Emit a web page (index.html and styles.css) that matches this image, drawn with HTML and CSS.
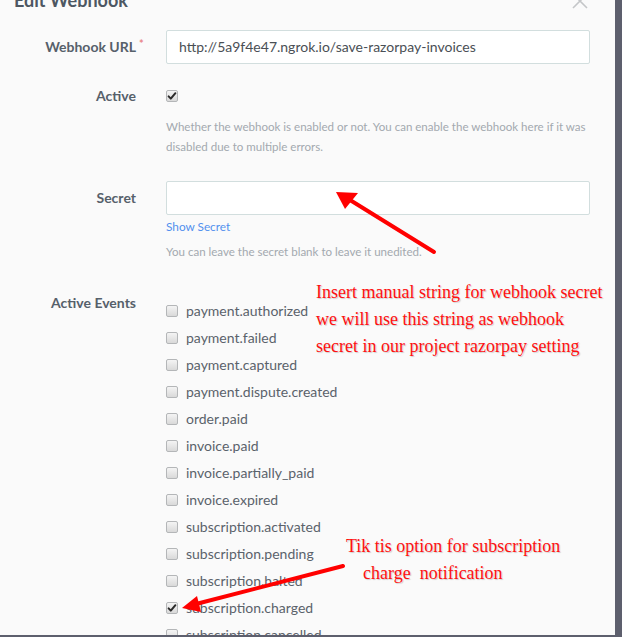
FILE: index.html
```html
<!DOCTYPE html>
<html>
<head>
<meta charset="utf-8">
<link rel="stylesheet" href="styles.css">
</head>
<body>
<div class="modal">
  <h2 class="title">Edit Webhook</h2>
  <svg class="close" width="16" height="16" viewBox="0 0 16 16"><path d="M1 14 L15 0 M1 0 L15 14" stroke="#c4c6c8" stroke-width="1.6" fill="none"/></svg>

  <div class="row row-url">
    <div class="label">Webhook URL<span class="req">*</span></div>
    <div class="field"><div class="input">http://5a9f4e47.ngrok.io/save-razorpay-invoices</div></div>
  </div>

  <div class="row row-active">
    <div class="label lbl16">Active</div>
    <div class="field">
      <div class="checkline"><span class="cb checked"><svg viewBox="0 0 12 12" width="12" height="12"><path d="M2.6 6.4 L4.8 8.6 L9.4 3.2" stroke="#2a2a2a" stroke-width="2" fill="none" stroke-linecap="round" stroke-linejoin="round"/></svg></span></div>
      <p class="help help-active">Whether the webhook is enabled or not. You can enable the webhook here if it was disabled due to multiple errors.</p>
    </div>
  </div>

  <div class="row row-secret">
    <div class="label lbl34">Secret</div>
    <div class="field">
      <div class="input"></div>
      <div class="show">Show Secret</div>
      <p class="help help-secret">You can leave the secret blank to leave it unedited.</p>
    </div>
  </div>

  <div class="row row-events">
    <div class="label lbl16">Active Events</div>
    <div class="field">
      <ul class="events">
        <li><span class="cb"></span>payment.authorized</li>
        <li><span class="cb"></span>payment.failed</li>
        <li><span class="cb"></span>payment.captured</li>
        <li><span class="cb"></span>payment.dispute.created</li>
        <li><span class="cb"></span>order.paid</li>
        <li><span class="cb"></span>invoice.paid</li>
        <li><span class="cb"></span>invoice.partially_paid</li>
        <li><span class="cb"></span>invoice.expired</li>
        <li><span class="cb"></span>subscription.activated</li>
        <li><span class="cb"></span>subscription.pending</li>
        <li><span class="cb"></span>subscription.halted</li>
        <li><span class="cb checked"><svg viewBox="0 0 12 12" width="12" height="12"><path d="M2.6 6.4 L4.8 8.6 L9.4 3.2" stroke="#2a2a2a" stroke-width="2" fill="none" stroke-linecap="round" stroke-linejoin="round"/></svg></span>subscription.charged</li>
        <li><span class="cb"></span>subscription.cancelled</li>
      </ul>
    </div>
  </div>

  <div class="note note1">Insert manual string for webhook secret<br>we will use this string as webhook<br>secret in our project razorpay setting</div>
  <div class="note note2">Tik tis option for subscription<br><span class="indent">charge&nbsp; notification</span></div>

  <svg class="arrows" width="622" height="637" viewBox="0 0 622 637">
    <line x1="434" y1="252" x2="350" y2="200" stroke="#ff0000" stroke-width="4" stroke-linecap="round"/>
    <polygon points="336,192 358,193 345,209" fill="#ff0000"/>
    <line x1="343" y1="566" x2="196" y2="604" stroke="#ff0000" stroke-width="4" stroke-linecap="round"/>
    <polygon points="182,608 197,596 201,612" fill="#ff0000"/>
  </svg>
</div>
<div class="backdrop"></div>
</body>
</html>
```

FILE: styles.css
```css
html, body {
  margin: 0;
  padding: 0;
}
body {
  width: 622px;
  height: 637px;
  background: #5d5f6d;
  display: flex;
  overflow: hidden;
  font-family: Lato, "Open Sans", sans-serif;
}
.modal {
  position: relative;
  width: 615px;
  height: 635px;
  flex: none;
  background: #fafafa;
  overflow: hidden;
}
.backdrop {
  flex: 1;
}
.title {
  margin: -10px 0 0 14px;
  font-size: 18px;
  line-height: 20px;
  font-weight: 700;
  color: #4d5762;
  height: 20px;
}
.close {
  position: absolute;
  left: 572px;
  top: -6px;
}
.row {
  display: grid;
  grid-template-columns: 136px 424px;
  column-gap: 30px;
}
.row-url { margin-top: 20px; }
.row-active { margin-top: 24px; }
.row-secret { margin-top: 24px; }
.row-events { margin-top: 35px; }
.label {
  text-align: right;
  font-size: 14px;
  font-weight: 700;
  color: #56606a;
  line-height: 34px;
  position: relative;
  white-space: nowrap;
}
.req {
  color: #e98686;
  font-size: 11px;
  position: absolute;
  left: 139px;
  top: -3px;
}
.lbl16 { line-height: 16px; }
.lbl34 { line-height: 34px; }
.input {
  height: 32px;
  border: 1px solid #d2dede;
  border-radius: 2px;
  background: #fff;
  padding: 0 12px;
  font-size: 14px;
  line-height: 32px;
  color: #4a4f55;
}
.checkline {
  height: 16px;
  display: flex;
  align-items: center;
}
.cb {
  display: inline-block;
  box-sizing: border-box;
  width: 12px;
  height: 12px;
  border: 1px solid #b4b6b8;
  border-radius: 2px;
  background: linear-gradient(#f4f4f4, #d9d9d9);
  flex: none;
  position: relative;
}
.cb svg {
  position: absolute;
  left: -1px;
  top: -1px;
}
.help {
  margin: 0;
  font-size: 11.55px;
  color: #a3a9af;
}
.help-active {
  margin-top: 13px;
  line-height: 20px;
}
.show {
  margin-top: 4px;
  font-size: 11.8px;
  line-height: 16px;
  color: #5290ee;
}
.help-secret {
  margin-top: 9px;
  line-height: 16px;
}
.events {
  list-style: none;
  margin: 2px 0 0;
  padding: 0;
}
.events li {
  height: 27px;
  display: flex;
  align-items: center;
  gap: 8px;
  font-size: 14px;
  color: #5a626b;
}
.note {
  position: absolute;
  font-family: "Liberation Serif", serif;
  font-size: 18px;
  line-height: 27px;
  color: #ff1010;
  text-shadow: 1px 1px 1px rgba(0, 0, 0, 0.18);
  white-space: nowrap;
}
.note1 { left: 316px; top: 279px; }
.note2 { left: 346px; top: 533px; }
.indent { padding-left: 17px; }
.arrows {
  position: absolute;
  left: 0;
  top: 0;
  pointer-events: none;
}
```
